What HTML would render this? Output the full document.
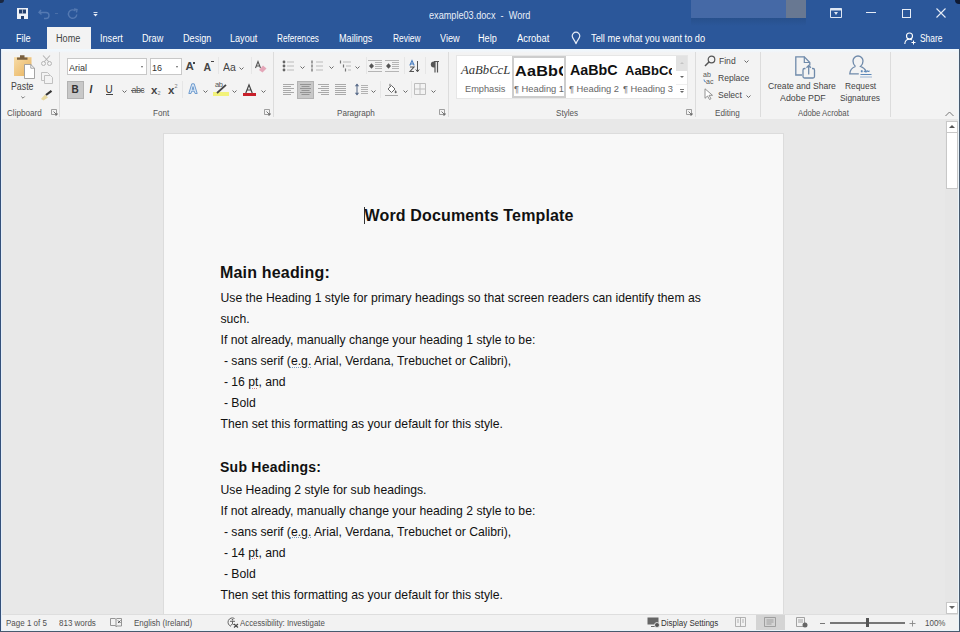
<!DOCTYPE html>
<html><head><meta charset="utf-8">
<style>
*{margin:0;padding:0;box-sizing:border-box}
html,body{width:960px;height:632px;overflow:hidden;background:#2b579a;font-family:"Liberation Sans",sans-serif;position:relative}
.a{position:absolute;white-space:nowrap}
svg.a{overflow:visible}
.tab{color:#fff;font-size:10px;top:33px;line-height:11px;transform:scaleX(.91);transform-origin:0 0}
.dt{color:#111;font-size:12.2px;left:220.5px;line-height:21px}
.gl{font-size:9px;color:#555;top:108px;line-height:10px;transform:scaleX(.9);transform-origin:0 0}
.sb{font-size:8.5px;color:#505050;top:618px;line-height:10px;transform:scaleX(.94);transform-origin:0 0}
.rt{font-size:9.5px;color:#444;line-height:10px;transform:scaleX(.9);transform-origin:0 0}
.sep{position:absolute;width:1px;background:#dcdcdc}
.dd{position:absolute;width:0;height:0;border-left:2px solid transparent;border-right:2px solid transparent;border-top:2px solid #666}
.ln{position:absolute;height:1px;background:#666}
</style></head><body>
<!-- title bar -->
<div class="a" style="left:0;top:0;width:960px;height:49px;background:#2b579a"></div>
<div class="a" style="left:691px;top:18px;width:115px;height:8px;background:linear-gradient(#27508c,#2b579a)"></div>
<div class="a" style="left:691px;top:0;width:95px;height:18px;background:#4569a6"></div>
<div class="a" style="left:786px;top:0;width:20px;height:18px;background:#687892"></div>
<div class="a" style="left:0;top:0;width:4px;height:3px;background:#1a2740;border-radius:0 0 4px 0"></div>
<div class="a" style="left:955px;top:0;width:5px;height:4px;background:#0f1a33;border-radius:0 0 0 5px"></div>
<div class="a" style="left:429px;top:9px;font-size:11px;line-height:12px;color:#e8eef8;transform:scaleX(.83);transform-origin:0 0">example03.docx&nbsp; -&nbsp; Word</div>
<!-- QAT -->
<svg class="a" style="left:16.5px;top:7.5px" width="11" height="11" viewBox="0 0 11 11"><path d="M0 0h11v11H0z" fill="#eef2f8"/><path d="M2 1.5h7v4H2z" fill="#24406e"/><path d="M5.2 1.5h.6v4h-.6z" fill="#eef2f8"/><path d="M4 8h3v3H4z" fill="#24406e"/></svg>
<svg class="a" style="left:38px;top:8px" width="13" height="11" viewBox="0 0 13 11"><path d="M3 2 L1 4.5 L3.5 6.5 M1.5 4.5 H8 A3 3 0 0 1 8 10.5 H6" fill="none" stroke="#5479b2" stroke-width="1.4"/></svg>
<div class="a" style="left:55px;top:13px;width:3px;height:1px;background:#4a6fa8"></div>
<svg class="a" style="left:66px;top:8px" width="13" height="12" viewBox="0 0 13 12"><path d="M9.5 3 A4.2 4.2 0 1 0 10.8 6.5" fill="none" stroke="#5479b2" stroke-width="1.4"/><path d="M8 1 L11 1.5 L10.5 4.5" fill="none" stroke="#5479b2" stroke-width="1.4"/></svg>
<svg class="a" style="left:93px;top:11.5px" width="5" height="5" viewBox="0 0 5 5"><path d="M0.5 0.5h4" stroke="#e6ecf6" stroke-width=".9"/><path d="M0.3 2h4.4L2.5 4.5z" fill="#e6ecf6"/></svg>
<!-- window controls -->
<svg class="a" style="left:830px;top:8px" width="12" height="10" viewBox="0 0 12 10"><path d="M0.5 0.5h11v9H0.5z" fill="none" stroke="#dfe7f3" stroke-width="1"/><path d="M0.5 0.5h11v2H0.5z" fill="#dfe7f3"/><path d="M4 4h4L6 7z" fill="#dfe7f3"/></svg>
<div class="a" style="left:866px;top:12px;width:10px;height:1px;background:#e6ecf6"></div>
<div class="a" style="left:901.5px;top:8.5px;width:9px;height:9px;border:1px solid #e6ecf6"></div>
<svg class="a" style="left:936px;top:8px" width="10" height="10" viewBox="0 0 10 10"><path d="M0.5 0.5L9.5 9.5M9.5 0.5L0.5 9.5" stroke="#e6ecf6" stroke-width="1.1"/></svg>
<!-- tabs -->
<div class="a" style="left:47px;top:27px;width:44px;height:23px;background:#f3f3f3"></div>
<div class="a tab" style="left:16px">File</div>
<div class="a tab" style="left:56px;color:#444">Home</div>
<div class="a tab" style="left:100px">Insert</div>
<div class="a tab" style="left:142px">Draw</div>
<div class="a tab" style="left:183px">Design</div>
<div class="a tab" style="left:230px">Layout</div>
<div class="a tab" style="left:277px;transform:scaleX(.82)">References</div>
<div class="a tab" style="left:339px">Mailings</div>
<div class="a tab" style="left:393px;transform:scaleX(.84)">Review</div>
<div class="a tab" style="left:440px">View</div>
<div class="a tab" style="left:478px">Help</div>
<div class="a tab" style="left:517px;transform:scaleX(.94)">Acrobat</div>
<svg class="a" style="left:571px;top:31px" width="10" height="14" viewBox="0 0 10 14"><path d="M5 1.2A3.8 3.8 0 0 1 8.8 5C8.8 7.3 6.3 9 5.6 11.3H4.4C3.7 9 1.2 7.3 1.2 5A3.8 3.8 0 0 1 5 1.2z" fill="none" stroke="#e8eef8" stroke-width="1.2"/><path d="M4.2 12.6h1.6" stroke="#e8eef8" stroke-width="1"/></svg>
<div class="a tab" style="left:590.5px;transform:scaleX(.925)">Tell me what you want to do</div>
<svg class="a" style="left:904px;top:32px" width="12" height="13" viewBox="0 0 12 13"><circle cx="5.5" cy="4" r="3" fill="none" stroke="#fff" stroke-width="1.1"/><path d="M0.8 12 C1 8.5 3 7.3 5.5 7.3 C6.5 7.3 7.3 7.5 8 8" fill="none" stroke="#fff" stroke-width="1.1"/><path d="M9.5 8.5v4M7.5 10.5h4" stroke="#fff" stroke-width="1"/></svg>
<div class="a tab" style="left:920px;transform:scaleX(.84)">Share</div>
<div class="a" style="left:1px;top:49px;width:958px;height:70px;background:linear-gradient(#f0f8fd 0,#f0f6fb 2px,#f3f3f3 4px)"></div>
<!-- Clipboard -->
<svg class="a" style="left:13px;top:54px" width="23" height="25" viewBox="0 0 23 25"><defs><linearGradient id="cb" x1="0" y1="0" x2="1" y2="1"><stop offset="0" stop-color="#f7dca8"/><stop offset="1" stop-color="#e8b25c"/></linearGradient></defs><rect x="1" y="3.2" width="17.5" height="18.8" fill="url(#cb)"/><path d="M4 5.8h10.5V3.5h-3V1.3h-4.5v2.2H4z" fill="#7a6040"/><path d="M11.5 10.5h6.3l3.7 3.7v10.3H11.5z" fill="#fff" stroke="#9a9a9a" stroke-width=".9"/><path d="M17.8 10.5v3.7h3.7" fill="none" stroke="#9a9a9a" stroke-width=".9"/></svg>
<div class="a rt" style="left:11px;top:81.5px;font-size:10px;transform:scaleX(.88)">Paste</div>
<svg class="a" style="left:21px;top:96px" width="4" height="3" viewBox="0 0 4 3"><path d="M0.3 0.5L2 2.2L3.7 0.5" fill="none" stroke="#666" stroke-width=".9"/></svg>
<svg class="a" style="left:41px;top:55px" width="11" height="11" viewBox="0 0 11 11"><path d="M2 0.5L8 7M9 0.5L3 7" stroke="#b5b5b5" stroke-width="1.1"/><circle cx="2.5" cy="8.5" r="2" fill="none" stroke="#b5b5b5"/><circle cx="8.5" cy="8.5" r="2" fill="none" stroke="#b5b5b5"/></svg>
<svg class="a" style="left:41px;top:72px" width="12" height="12" viewBox="0 0 12 12"><path d="M0.5 0.5h6l2 2v6h-8z" fill="#f3f3f3" stroke="#c0c0c0"/><path d="M3.5 3.5h6l2 2v6h-8z" fill="#f3f3f3" stroke="#c0c0c0"/></svg>
<svg class="a" style="left:40px;top:90px" width="13" height="11" viewBox="0 0 13 11"><path d="M1 9 L5 4.5 L8 7.5 L3.5 10.5z" fill="#e8d9a0"/><path d="M6 5 L11.5 0.8" stroke="#333" stroke-width="2.2"/></svg>
<div class="a gl" style="left:7px">Clipboard</div>
<svg class="a" style="left:51px;top:109px" width="7" height="7" viewBox="0 0 7 7"><path d="M0.5 0.5h5v5h-5z" fill="none" stroke="#888" stroke-width=".8"/><path d="M2.5 2.5L6 6M4 6h2V4" fill="none" stroke="#666" stroke-width=".9"/></svg>
<div class="sep" style="left:59px;top:52px;height:65px"></div>
<!-- Font -->
<div class="a" style="left:67px;top:58px;width:80px;height:17px;background:#fff;border:1px solid #c8c8c8"></div>
<div class="a" style="left:68.5px;top:62px;font-size:9.5px;line-height:11px;color:#333;transform:scaleX(.95);transform-origin:0 0">Arial</div>
<div class="dd" style="left:141px;top:66px;border-width:2px 1.5px 0 1.5px"></div>
<div class="a" style="left:150px;top:58px;width:32px;height:17px;background:#fff;border:1px solid #c8c8c8"></div>
<div class="a" style="left:151.5px;top:62px;font-size:9.5px;line-height:11px;color:#333;transform:scaleX(.95);transform-origin:0 0">16</div>
<div class="dd" style="left:175.5px;top:66px;border-width:2px 1.5px 0 1.5px"></div>
<div class="a" style="left:185.5px;top:60px;font-size:11.5px;line-height:12px;color:#444;font-weight:bold">A</div>
<div class="a" style="left:193px;top:62px;width:2px;height:2px;background:#444"></div>
<div class="a" style="left:203.5px;top:61.5px;font-size:10.5px;line-height:11px;color:#444;font-weight:bold">A</div>
<div class="a" style="left:211px;top:61px;width:3px;height:1px;background:#444"></div>
<div class="sep" style="left:218px;top:57px;height:17px;background:#e6e6e6"></div>
<div class="a" style="left:223px;top:60.5px;font-size:11px;line-height:12px;color:#444;transform:scaleX(.95);transform-origin:0 0">Aa</div>
<svg class="a" style="left:239.0px;top:66.5px" width="5" height="3" viewBox="0 0 5 3"><path d="M0.5 0.5L2.5 2.5L4.5 0.5" fill="none" stroke="#6a6a6a" stroke-width="1"/></svg>
<div class="sep" style="left:250.5px;top:57px;height:17px;background:#e6e6e6"></div>
<svg class="a" style="left:255px;top:61px" width="12" height="12" viewBox="0 0 12 12"><path d="M0.5 7L3 0.5L5.5 7M1.5 5h3" fill="none" stroke="#555" stroke-width="1.1"/><path d="M4 9 L8 4.5 L11.5 7.5 L7.5 11.5z" fill="#e4a6b8"/></svg>
<div class="a" style="left:67px;top:81px;width:16.5px;height:17.5px;background:#c8c8c8;border:1px solid #b2b2b2"></div>
<div class="a" style="left:71.5px;top:84px;font-size:10px;line-height:11px;color:#333;font-weight:bold">B</div>
<div class="a" style="left:89.5px;top:84px;font-size:10px;line-height:11px;color:#333;font-style:italic;font-weight:bold">I</div>
<div class="a" style="left:105.5px;top:84px;font-size:10px;line-height:11px;color:#333">U</div>
<div class="a" style="left:105.5px;top:94px;width:7px;height:1px;background:#444"></div>
<svg class="a" style="left:121.5px;top:89.5px" width="5" height="3" viewBox="0 0 5 3"><path d="M0.5 0.5L2.5 2.5L4.5 0.5" fill="none" stroke="#6a6a6a" stroke-width="1"/></svg>
<div class="a" style="left:131.5px;top:85px;font-size:9px;line-height:10px;color:#555;letter-spacing:-.6px">abc</div>
<div class="a" style="left:131px;top:90px;width:13px;height:1px;background:#666"></div>
<div class="a" style="left:151px;top:83.5px;font-size:11.5px;line-height:12px;color:#444;font-weight:bold">x</div>
<div class="a" style="left:157.5px;top:90px;font-size:5.5px;line-height:6px;color:#777">2</div>
<div class="a" style="left:168px;top:83.5px;font-size:11.5px;line-height:12px;color:#444;font-weight:bold">x</div>
<div class="a" style="left:174.5px;top:83px;font-size:5.5px;line-height:6px;color:#777">2</div>
<div class="sep" style="left:182px;top:81px;height:17px;background:#e6e6e6"></div>
<svg class="a" style="left:188px;top:83px" width="10" height="11" viewBox="0 0 10 11"><path d="M0.8 10.5L3.8 0.8H6.2L9.2 10.5H7L6.3 8.2H3.7L3 10.5z M4.2 6.4h1.6L5 3.6z" fill="#dbe8f6" stroke="#6f9ccf" stroke-width="1"/></svg>
<svg class="a" style="left:202.5px;top:90.0px" width="5" height="3" viewBox="0 0 5 3"><path d="M0.5 0.5L2.5 2.5L4.5 0.5" fill="none" stroke="#6a6a6a" stroke-width="1"/></svg>
<div class="a" style="left:213px;top:92px;width:16px;height:3.5px;background:#f2f27a"></div>
<div class="a" style="left:215px;top:81px;font-size:7.5px;line-height:8px;color:#555;letter-spacing:-.5px">ab</div>
<svg class="a" style="left:216px;top:84px" width="11" height="10" viewBox="0 0 11 10"><path d="M1 9L10 0.8" stroke="#444" stroke-width="1.8"/></svg>
<svg class="a" style="left:232.0px;top:90.0px" width="5" height="3" viewBox="0 0 5 3"><path d="M0.5 0.5L2.5 2.5L4.5 0.5" fill="none" stroke="#6a6a6a" stroke-width="1"/></svg>
<svg class="a" style="left:245px;top:83.5px" width="8" height="9" viewBox="0 0 8 9"><path d="M0.8 9L4 0.8L7.2 9M2 6h4" fill="none" stroke="#444" stroke-width="1.2"/></svg>
<div class="a" style="left:243px;top:93px;width:12.5px;height:2.8px;background:#c8202a"></div>
<svg class="a" style="left:260.5px;top:90.0px" width="5" height="3" viewBox="0 0 5 3"><path d="M0.5 0.5L2.5 2.5L4.5 0.5" fill="none" stroke="#6a6a6a" stroke-width="1"/></svg>
<div class="a gl" style="left:153px">Font</div>
<svg class="a" style="left:264px;top:109px" width="7" height="7" viewBox="0 0 7 7"><path d="M0.5 0.5h5v5h-5z" fill="none" stroke="#888" stroke-width=".8"/><path d="M2.5 2.5L6 6M4 6h2V4" fill="none" stroke="#666" stroke-width=".9"/></svg>
<div class="sep" style="left:273px;top:52px;height:65px"></div>
<!-- Paragraph -->
<svg class="a" style="left:282px;top:60px" width="13" height="12" viewBox="0 0 13 12"><circle cx="2" cy="2" r="1.4" fill="#666"/><circle cx="2" cy="6" r="1.4" fill="#666"/><circle cx="2" cy="10" r="1.4" fill="#666"/><path d="M5 2h7M5 6h7M5 10h7" stroke="#bbb" stroke-width="1"/></svg>
<svg class="a" style="left:300.0px;top:65.5px" width="5" height="3" viewBox="0 0 5 3"><path d="M0.5 0.5L2.5 2.5L4.5 0.5" fill="none" stroke="#6a6a6a" stroke-width="1"/></svg>
<svg class="a" style="left:311px;top:60px" width="13" height="12" viewBox="0 0 13 12"><path d="M1 0.5v3M1 4.5v3M1 8.5v3" stroke="#666" stroke-width="1.2"/><path d="M5 2h7M5 6h7M5 10h7" stroke="#bbb" stroke-width="1"/></svg>
<svg class="a" style="left:328.5px;top:65.5px" width="5" height="3" viewBox="0 0 5 3"><path d="M0.5 0.5L2.5 2.5L4.5 0.5" fill="none" stroke="#6a6a6a" stroke-width="1"/></svg>
<svg class="a" style="left:339px;top:60px" width="13" height="12" viewBox="0 0 13 12"><path d="M1.5 0.5v3M4.5 4.5v3M6.5 8.5v3" stroke="#777" stroke-width="1.2"/><path d="M4 2h8M7 6h5M9 10h3" stroke="#bbb" stroke-width="1"/></svg>
<svg class="a" style="left:355.0px;top:65.5px" width="5" height="3" viewBox="0 0 5 3"><path d="M0.5 0.5L2.5 2.5L4.5 0.5" fill="none" stroke="#6a6a6a" stroke-width="1"/></svg>
<div class="sep" style="left:365.5px;top:57px;height:17px;background:#e6e6e6"></div>
<svg class="a" style="left:368px;top:60px" width="14" height="12" viewBox="0 0 14 12"><path d="M0 0.5h14M7 2.5h7M7 4.5h7M7 6.5h7M7 8.5h7M0 11.5h14" stroke="#a5a5a5" stroke-width=".8"/><path d="M3.5 3.2L1 6L3.5 8.8L6 6z" fill="#555"/></svg>
<svg class="a" style="left:385px;top:60px" width="14" height="12" viewBox="0 0 14 12"><path d="M0 0.5h14M7 2.5h7M7 4.5h7M7 6.5h7M7 8.5h7M0 11.5h14" stroke="#a5a5a5" stroke-width=".8"/><path d="M3.5 3.2L1 6L3.5 8.8L6 6z" fill="#555"/></svg>
<div class="sep" style="left:403.5px;top:57px;height:17px;background:#e6e6e6"></div>
<svg class="a" style="left:409px;top:60px" width="11" height="13" viewBox="0 0 11 13"><path d="M0.8 5.5L3 0.5L5.2 5.5M1.5 4h3" fill="none" stroke="#4a7ec0" stroke-width="1.1"/><path d="M1 7h4L1 11.5h4" fill="none" stroke="#555" stroke-width="1.1"/><path d="M8.5 1v10.5M6.8 9.5L8.5 11.8L10.2 9.5" fill="none" stroke="#555" stroke-width="1"/></svg>
<div class="sep" style="left:424.5px;top:57px;height:17px;background:#e6e6e6"></div>
<svg class="a" style="left:430px;top:61px" width="9" height="12" viewBox="0 0 9 12"><path d="M5 0.5H3.8A3 3 0 0 0 3.8 6.5H5z" fill="#555"/><path d="M5 0.5v11M7.5 0.5v11M4 0.5h5" stroke="#555" stroke-width="1.2"/></svg>
<svg class="a" style="left:283px;top:84px" width="11" height="11" viewBox="0 0 11 11"><path d="M0 0.5h11M0 2.5h8M0 4.5h11M0 6.5h8M0 8.5h11M0 10.5h8" stroke="#a0a0a0" stroke-width=".9"/></svg>
<div class="a" style="left:297px;top:80.5px;width:17px;height:18px;background:#c8c8c8;border:1px solid #b2b2b2"></div>
<svg class="a" style="left:300px;top:84px" width="11" height="11" viewBox="0 0 11 11"><path d="M0 0.5h11M1.5 2.5h8M0 4.5h11M1.5 6.5h8M0 8.5h11M1.5 10.5h8" stroke="#8c8c8c" stroke-width=".9"/></svg>
<svg class="a" style="left:317.5px;top:84px" width="11" height="11" viewBox="0 0 11 11"><path d="M0 0.5h11M3 2.5h8M0 4.5h11M3 6.5h8M0 8.5h11M3 10.5h8" stroke="#a0a0a0" stroke-width=".9"/></svg>
<svg class="a" style="left:334.5px;top:84px" width="11" height="11" viewBox="0 0 11 11"><path d="M0 0.5h11M0 2.5h11M0 4.5h11M0 6.5h11M0 8.5h11M0 10.5h11" stroke="#a0a0a0" stroke-width=".9"/></svg>
<svg class="a" style="left:354px;top:83px" width="14" height="13" viewBox="0 0 14 13"><path d="M3 1v11" stroke="#5d6f8c" stroke-width="1.1"/><path d="M0.8 3.2L3 0.5L5.2 3.2zM0.8 9.8L3 12.5L5.2 9.8z" fill="#5d6f8c"/><path d="M7 2.5h7M7 4.5h7M7 6.5h7M7 8.5h7M7 10.5h7" stroke="#aaa" stroke-width=".9"/></svg>
<svg class="a" style="left:370.5px;top:90.0px" width="5" height="3" viewBox="0 0 5 3"><path d="M0.5 0.5L2.5 2.5L4.5 0.5" fill="none" stroke="#6a6a6a" stroke-width="1"/></svg>
<div class="sep" style="left:380px;top:81px;height:17px;background:#e6e6e6"></div>
<svg class="a" style="left:385px;top:83px" width="13" height="13" viewBox="0 0 13 13"><path d="M3 6L6.5 2.5L10 6L6.5 9.5z" fill="#fff" stroke="#666" stroke-width="1"/><path d="M5 3.5V0.8" stroke="#666" stroke-width="1"/><path d="M10.5 7c.8 1 1.2 1.6 1.2 2.2a1 1 0 0 1-2 0c0-.6.4-1.2.8-2.2z" fill="#666"/><path d="M0 12.5h13" stroke="#aaa" stroke-width="1"/></svg>
<svg class="a" style="left:403.0px;top:90.0px" width="5" height="3" viewBox="0 0 5 3"><path d="M0.5 0.5L2.5 2.5L4.5 0.5" fill="none" stroke="#6a6a6a" stroke-width="1"/></svg>
<div class="sep" style="left:411px;top:81px;height:17px;background:#e6e6e6"></div>
<svg class="a" style="left:414px;top:83px" width="12" height="12" viewBox="0 0 12 12"><path d="M0.5 0.5h11v11h-11zM6 0.5v11M0.5 6h11" fill="none" stroke="#bdbdbd" stroke-width="1"/></svg>
<svg class="a" style="left:431.0px;top:90.0px" width="5" height="3" viewBox="0 0 5 3"><path d="M0.5 0.5L2.5 2.5L4.5 0.5" fill="none" stroke="#6a6a6a" stroke-width="1"/></svg>
<div class="a gl" style="left:337px">Paragraph</div>
<svg class="a" style="left:439px;top:109px" width="7" height="7" viewBox="0 0 7 7"><path d="M0.5 0.5h5v5h-5z" fill="none" stroke="#888" stroke-width=".8"/><path d="M2.5 2.5L6 6M4 6h2V4" fill="none" stroke="#666" stroke-width=".9"/></svg>
<div class="sep" style="left:448px;top:52px;height:65px"></div>
<!-- Styles -->
<div class="a" style="left:455.5px;top:54.5px;width:221px;height:44px;background:#fff;border:1px solid #e6e6e6;border-right:none"></div>
<div class="a" style="left:461px;top:63px;font-family:'Liberation Serif',serif;font-style:italic;font-size:13px;line-height:14px;color:#333;transform:scaleX(.975);transform-origin:0 0">AaBbCcL</div>
<div class="a" style="left:465px;top:84px;font-size:9.5px;line-height:10px;color:#666;transform:scaleX(.97);transform-origin:0 0">Emphasis</div>
<div class="a" style="left:511.5px;top:55.5px;width:54px;height:42.5px;border:2px solid #cdcdcd;background:#fff"></div>
<div class="a" style="left:514.5px;top:62.5px;width:48.5px;overflow:hidden;font-size:15px;line-height:16px;color:#111;font-weight:bold"><span style="display:inline-block;transform:scaleX(1.08);transform-origin:0 0;letter-spacing:.2px">AaBbC</span></div>
<div class="a" style="left:514px;top:84px;font-size:9.5px;line-height:10px;color:#666;transform:scaleX(.98);transform-origin:0 0">¶ Heading 1</div>
<div class="a" style="left:570px;top:63px;font-size:14px;line-height:15px;color:#111;font-weight:bold;transform:scaleX(1.02);transform-origin:0 0">AaBbC</div>
<div class="a" style="left:569px;top:84px;font-size:9.5px;line-height:10px;color:#666;transform:scaleX(.98);transform-origin:0 0">¶ Heading 2</div>
<div class="a" style="left:625px;top:64px;width:47px;overflow:hidden;font-size:13px;line-height:14px;color:#111;font-weight:bold">AaBbC<span style="display:inline-block;width:6px">c</span></div>
<div class="a" style="left:623px;top:84px;width:50px;overflow:hidden;font-size:9.5px;line-height:10px;color:#666"><span style="display:inline-block;transform:scaleX(.98);transform-origin:0 0">¶ Heading 3</span></div>
<div class="a" style="left:676px;top:54.5px;width:12px;height:44px;background:#fff;border:1px solid #e6e6e6;border-left:none"></div>
<div class="a" style="left:676px;top:55.5px;width:11px;height:15px;background:#e2e2e2"></div>
<div class="dd" style="left:680px;top:61.5px;border-width:0 2px 2px 2px;border-top:0;border-bottom:2px solid #c4c4c4"></div>
<div class="a" style="left:676px;top:83.5px;width:11px;height:1px;background:#eeeeee"></div>
<div class="dd" style="left:680px;top:76px;border-width:2px 2px 0 2px"></div>
<div class="a" style="left:680px;top:88.5px;width:4px;height:1px;background:#777"></div>
<div class="dd" style="left:680px;top:90.5px;border-width:2px 2px 0 2px"></div>
<div class="a gl" style="left:556px">Styles</div>
<svg class="a" style="left:686px;top:109px" width="7" height="7" viewBox="0 0 7 7"><path d="M0.5 0.5h5v5h-5z" fill="none" stroke="#888" stroke-width=".8"/><path d="M2.5 2.5L6 6M4 6h2V4" fill="none" stroke="#666" stroke-width=".9"/></svg>
<div class="sep" style="left:695px;top:52px;height:65px"></div>
<!-- Editing -->
<svg class="a" style="left:704px;top:55px" width="12" height="12" viewBox="0 0 12 12"><circle cx="7.5" cy="4.5" r="3.3" fill="none" stroke="#555" stroke-width="1.2"/><path d="M5.2 6.8L1 11" stroke="#555" stroke-width="1.5"/></svg>
<div class="a rt" style="left:719px;top:55.5px">Find</div>
<svg class="a" style="left:743.5px;top:60.0px" width="5" height="3" viewBox="0 0 5 3"><path d="M0.5 0.5L2.5 2.5L4.5 0.5" fill="none" stroke="#6a6a6a" stroke-width="1"/></svg>
<svg class="a" style="left:703px;top:71px" width="13" height="13" viewBox="0 0 13 13"><text x="0" y="6" font-size="7" font-family="Liberation Sans" fill="#555">ab</text><text x="3" y="12.5" font-size="7" font-family="Liberation Sans" fill="#555">ac</text><path d="M1 8.5 Q1 11 3 11" fill="none" stroke="#4a7ec0" stroke-width=".9"/></svg>
<div class="a rt" style="left:718px;top:73px">Replace</div>
<svg class="a" style="left:704px;top:88px" width="10" height="12" viewBox="0 0 10 12"><path d="M1 0.8v9.5l2.5-2.3 2 3.5 1.5-.8-2-3.4h3.5z" fill="#fff" stroke="#888" stroke-width=".9"/></svg>
<div class="a rt" style="left:718px;top:90px">Select</div>
<svg class="a" style="left:745.5px;top:94.5px" width="5" height="3" viewBox="0 0 5 3"><path d="M0.5 0.5L2.5 2.5L4.5 0.5" fill="none" stroke="#6a6a6a" stroke-width="1"/></svg>
<div class="a gl" style="left:715px">Editing</div>
<div class="sep" style="left:760px;top:52px;height:65px"></div>
<!-- Adobe Acrobat -->
<svg class="a" style="left:794px;top:55px" width="24" height="25" viewBox="0 0 24 25"><path d="M8 20H1.8V1.8h8.5l5.5 5.7v3" fill="none" stroke="#6f8aaa" stroke-width="1.3"/><path d="M10.3 1.8v5.7h5.5" fill="none" stroke="#6f8aaa" stroke-width="1.2"/><path d="M11.5 13.5h-1a1.5 1.5 0 0 0-1.5 1.5v6.5a1.5 1.5 0 0 0 1.5 1.5h8.5a1.5 1.5 0 0 0 1.5-1.5V15a1.5 1.5 0 0 0-1.5-1.5h-1" fill="none" stroke="#6f8aaa" stroke-width="1.3"/><path d="M14.7 19.5V10.5M12.5 12.7L14.7 10.5L16.9 12.7" fill="none" stroke="#6f8aaa" stroke-width="1.3"/></svg>
<div class="a rt" style="left:768px;top:81px;transform:scaleX(.905)">Create and Share</div>
<div class="a rt" style="left:780px;top:93px;transform:scaleX(.93)">Adobe PDF</div>
<svg class="a" style="left:848px;top:54px" width="27" height="25" viewBox="0 0 27 25"><path d="M7.5 12.5C5.5 11 5 9 5 7A5 5 0 0 1 15 7c0 2-.5 4-2.5 5.5c2.5.8 4.5 2.3 5.5 4.5M7.5 12.5C4.5 13.5 2 15.5 1.8 19.8h9" fill="none" stroke="#6f8aaa" stroke-width="1.3"/><path d="M13 16.5l1.5 1.5M14.5 16.5L13 18M16 18c.7-1 1.3-1.5 1.5-.5s.8.5 1.3-.3.8 0 1.2.3c.5.3 1-.3 1.5-.7M12.5 20.5h11" fill="none" stroke="#5d88b8" stroke-width="1.1"/><path d="M12 23h12" stroke="#9db6d3" stroke-width="1"/></svg>
<div class="a rt" style="left:845px;top:81px;transform:scaleX(.88)">Request</div>
<div class="a rt" style="left:840px;top:93px;transform:scaleX(.88)">Signatures</div>
<div class="a gl" style="left:798px;transform:scaleX(.86)">Adobe Acrobat</div>
<div class="sep" style="left:889.5px;top:52px;height:65px"></div>
<svg class="a" style="left:945px;top:111px" width="9" height="6" viewBox="0 0 9 6"><path d="M0.5 5L4.5 1L8.5 5" fill="none" stroke="#777" stroke-width="1"/></svg>

<!-- document area -->
<div class="a" style="left:1.5px;top:119px;width:957px;height:496px;background:#e8e8e8"></div>
<div class="a" style="left:162.5px;top:133px;width:621.5px;height:482px;background:#f8f8f8;border:1px solid #dcdcdc;border-bottom:none"></div>
<div class="a" style="left:364px;top:207px;width:1px;height:17px;background:#333"></div>
<div class="a" style="left:364.5px;top:205.5px;font-size:16px;line-height:20px;font-weight:bold;color:#111;letter-spacing:.15px">Word Documents Template</div>
<div class="a" style="left:220px;top:263px;font-size:16px;line-height:20px;font-weight:bold;color:#111;letter-spacing:.18px">Main heading:</div>
<div class="a dt" style="top:288.4px">Use the Heading 1 style for primary headings so that screen readers can identify them as<br>such.<br>If not already, manually change your heading 1 style to be:<br>&nbsp;- sans serif (<span style="text-decoration:underline dotted #7d9cc0;text-underline-offset:1px">e.g.</span> Arial, Verdana, Trebuchet or Calibri),<br>&nbsp;- 16 <span style="text-decoration:underline dotted #d08a8a;text-underline-offset:1px">pt</span>, and<br>&nbsp;- Bold<br>Then set this formatting as your default for this style.</div>
<div class="a" style="left:220px;top:456.7px;font-size:14px;line-height:20px;font-weight:bold;color:#111;letter-spacing:.25px">Sub Headings:</div>
<div class="a dt" style="top:480.2px">Use Heading 2 style for sub headings.<br>If not already, manually change your heading 2 style to be:<br>&nbsp;- sans serif (<span style="text-decoration:underline dotted #7d9cc0;text-underline-offset:1px">e.g.</span> Arial, Verdana, Trebuchet or Calibri),<br>&nbsp;- 14 <span style="text-decoration:underline dotted #d08a8a;text-underline-offset:1px">pt</span>, and<br>&nbsp;- Bold<br>Then set this formatting as your default for this style.</div>
<!-- scrollbar -->
<div class="a" style="left:945px;top:119px;width:13px;height:496px;background:#e6e6e6"></div>

<div class="a" style="left:946px;top:120.5px;width:12px;height:11.5px;background:#fff;border:1px solid #c8c8c8;border-bottom:none"></div>
<div class="dd" style="left:949px;top:124.5px;border-width:0 3px 3px 3px;border-top:0;border-bottom:3px solid #555"></div>
<div class="a" style="left:946px;top:132px;width:12px;height:57px;background:#fff;border:1px solid #c8c8c8"></div>
<div class="a" style="left:946px;top:601.5px;width:12px;height:12px;background:#fff;border:1px solid #c8c8c8"></div>
<div class="dd" style="left:949px;top:606px;border-width:3px 3px 0 3px"></div>

<!-- status bar -->
<div class="a" style="left:1px;top:614px;width:958px;height:16px;background:#f2f2f2;border-top:1px solid #dedede"></div>
<div class="a" style="left:1px;top:629.5px;width:958px;height:1.5px;background:#eaf4fb"></div>
<div class="a sb" style="left:6px">Page 1 of 5</div>
<div class="a sb" style="left:59px">813 words</div>
<svg class="a" style="left:110px;top:617px" width="12" height="10" viewBox="0 0 12 10"><path d="M0.5 1.5h4.5l1 .8v7l-1-.8H0.5zM6 2.3l1-.8h4.5v7.5H7l-1 .8" fill="none" stroke="#8a8a8a" stroke-width=".9"/><path d="M8 3.5l2.5 2.5M10.5 3.5L8 6" stroke="#555" stroke-width="1"/></svg>
<div class="a sb" style="left:134px">English (Ireland)</div>
<svg class="a" style="left:227px;top:617px" width="12" height="11" viewBox="0 0 12 11"><path d="M7.5 1.5A4.3 4.3 0 1 0 4 9.3" fill="none" stroke="#666" stroke-width="1"/><circle cx="5.5" cy="2.8" r=".8" fill="#555"/><path d="M3 4.3h5M5.5 4.3v2.2L4 8.5M5.5 6.5l1.2 1.5" fill="none" stroke="#555" stroke-width=".9"/><path d="M7 7l4 3.5M11 7l-4 3.5" stroke="#444" stroke-width="1.1"/></svg>
<div class="a sb" style="left:240px;transform:scaleX(.92)">Accessibility: Investigate</div>
<svg class="a" style="left:647px;top:617px" width="13" height="11" viewBox="0 0 13 11"><path d="M0.5 0.5h11v7h-11z" fill="#666"/><path d="M4 9.5h4" stroke="#666"/><circle cx="10" cy="8" r="2.5" fill="#555" stroke="#f2f2f2" stroke-width=".8"/></svg>
<div class="a sb" style="left:661px;color:#333">Display Settings</div>
<div class="a" style="left:756px;top:615px;width:29px;height:15px;background:#d4d4d4"></div>
<svg class="a" style="left:764px;top:617px" width="12" height="10" viewBox="0 0 12 10"><path d="M0.5 0.5h11v9h-11zM2.5 3h7M2.5 5h7M2.5 7h5" fill="none" stroke="#999" stroke-width=".9"/></svg>
<svg class="a" style="left:735px;top:617px" width="11" height="10" viewBox="0 0 11 10"><path d="M0.5 0.5h10v9h-10zM5.5 0.5v9M2 3h2M2 5h2M7 3h2M7 5h2" fill="none" stroke="#aaa" stroke-width=".9"/></svg>
<svg class="a" style="left:796px;top:617px" width="12" height="11" viewBox="0 0 12 11"><path d="M0.5 0.5h8v9h-8zM2 3h5M2 5h5" fill="none" stroke="#999" stroke-width=".9"/><circle cx="9" cy="8" r="2.5" fill="#666"/></svg>
<div class="a" style="left:820px;top:622.5px;width:5px;height:1px;background:#777"></div>
<div class="a" style="left:830px;top:622px;width:75px;height:1.5px;background:#777"></div>
<div class="a" style="left:866px;top:618px;width:3px;height:9px;background:#555"></div>
<svg class="a" style="left:909px;top:619.5px" width="7" height="7" viewBox="0 0 7 7"><path d="M3.5 0.5v6M0.5 3.5h6" stroke="#888" stroke-width=".9"/></svg>
<div class="a sb" style="left:925px">100%</div>
<!-- window border -->
<div class="a" style="left:0;top:49px;width:1px;height:583px;background:#34507a"></div>
<div class="a" style="left:1px;top:49px;width:1px;height:581px;background:#e4eefa"></div>
<div class="a" style="left:957.5px;top:49px;width:1.5px;height:582px;background:#eaf4fb"></div>
<div class="a" style="left:959px;top:49px;width:1px;height:583px;background:#485a6e"></div>
<div class="a" style="left:0;top:631px;width:960px;height:1px;background:#485a6e"></div>

</body></html>
